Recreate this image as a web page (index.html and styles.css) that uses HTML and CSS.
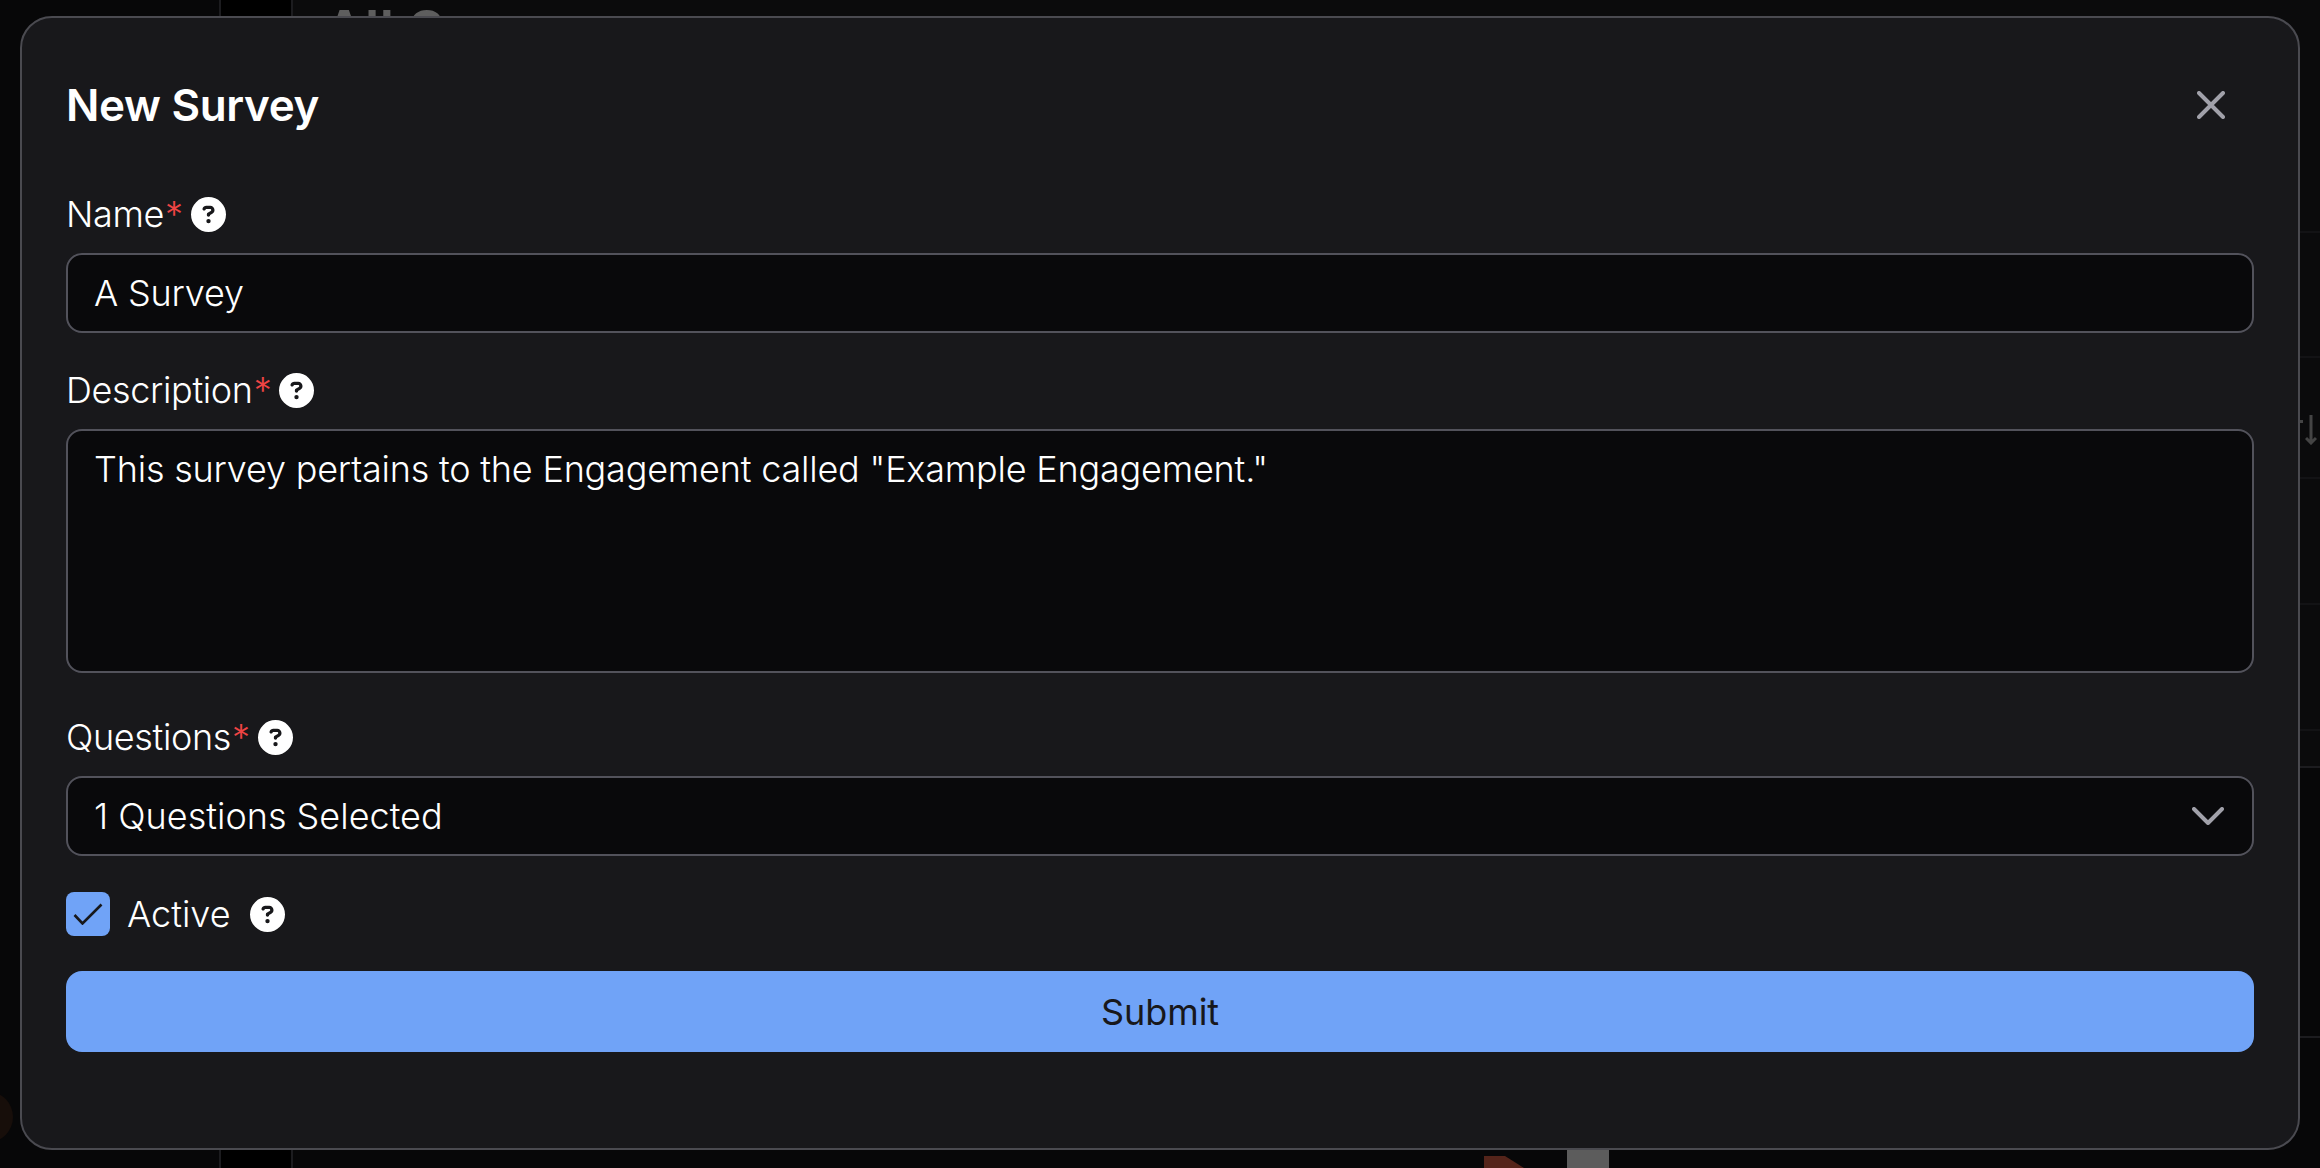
FILE: index.html
```html
<!DOCTYPE html>
<html lang="en">
<head>
<meta charset="utf-8">
<title>New Survey</title>
<link rel="stylesheet" href="styles.css">
</head>
<body>
<svg class="defs" aria-hidden="true"><symbol id="help" viewBox="0 0 512 512"><path d="M256 512A256 256 0 1 0 256 0a256 256 0 1 0 0 512zM169.800 165.300c7.900-22.300 29.100-37.300 52.800-37.300h58.300c34.900 0 63.100 28.300 63.100 63.100c0 22.600-12.100 43.500-31.700 54.800L280 264.400c-.2 13-10.900 23.600-24 23.600c-13.300 0-24-10.700-24-24V250.500c0-8.600 4.600-16.500 12.100-20.800l44.300-25.400c4.700-2.700 7.600-7.700 7.600-13.100c0-8.400-6.800-15.100-15.100-15.100H222.600c-3.400 0-6.400 2.100-7.500 5.300l-.4 1.200c-4.400 12.500-18.200 19-30.600 14.600s-19-18.200-14.600-30.600l.4-1.200zM224 352a32 32 0 1 1 64 0 32 32 0 1 1 -64 0z" fill="#fff"/></symbol></svg>
<div class="backdrop" aria-hidden="true">
  <div class="main-area"></div>
  <div class="rail"></div>
  <div class="peek-title">All S</div>
  <div class="line line-1"></div>
  <div class="line line-2"></div>
  <div class="line line-3"></div>
  <div class="line line-4"></div>
  <div class="line line-5"></div>
  <div class="line strong line-6"></div>
  <div class="line strong line-7"></div>
  <div class="tick"></div>
  <svg class="sort-arrow" viewBox="0 0 12 30"><path d="M6 0v28M1 23l5 5 5-5" fill="none" stroke="#444" stroke-width="3"/></svg>
  <div class="blob"></div>
  <svg class="chart-orange" viewBox="0 0 40 12"><path d="M0 0h21l19 12H0z" fill="#54241a"/></svg>
  <div class="chart-gray"></div>
</div>
<main class="modal">
  <header class="modal-head">
    <h1 class="modal-title">New Survey</h1>
    <svg class="close-icon" viewBox="0 0 28 28"><path d="M2 2l24 24M26 2L2 26" fill="none" stroke="#a1a1aa" stroke-width="4" stroke-linecap="round"/></svg>
  </header>
  <form class="form">
    <div class="field">
      <div class="label"><span>Name</span><span class="req">*</span><svg class="help"><use href="#help"/></svg></div>
      <div class="control">A Survey</div>
    </div>
    <div class="field">
      <div class="label"><span>Description</span><span class="req">*</span><svg class="help"><use href="#help"/></svg></div>
      <div class="control area">This survey pertains to the Engagement called "Example Engagement."</div>
    </div>
    <div class="field">
      <div class="label"><span>Questions</span><span class="req">*</span><svg class="help"><use href="#help"/></svg></div>
      <div class="control select"><span>1 Questions Selected</span>
        <svg class="chevron" viewBox="0 0 32 18"><path d="M2 2l14 14L30 2" fill="none" stroke="#a1a1aa" stroke-width="4" stroke-linecap="round" stroke-linejoin="round"/></svg>
      </div>
    </div>
    <div class="check-row">
      <span class="checkbox"><svg class="check" viewBox="0 0 30 22"><path d="M1.500 12l8 8.500L28.500 1.500" fill="none" stroke="#18181b" stroke-width="2.600"/></svg></span>
      <span class="check-label">Active</span>
      <svg class="help"><use href="#help"/></svg>
    </div>
    <div class="submit">Submit</div>
  </form>
</main>
</body>
</html>
```
FILE: styles.css
```css
* { box-sizing: border-box; }
html, body { margin: 0; height: 100%; }
body {
  position: relative;
  overflow: hidden;
  background: #070708;
  font-family: Inter, "Liberation Sans", sans-serif;
  font-weight: 300;
  color: #fff;
  padding: 16px 20px 18px;
}
.defs { position: absolute; width: 0; height: 0; }
.backdrop { position: absolute; inset: 0; overflow: hidden; }
.main-area { position: absolute; left: 291px; right: 0; top: 0; height: 767px; background: #0b0b0c; }
.rail { position: absolute; top: 0; bottom: 0; left: 219px; width: 74px; background: #000; border-left: 2px solid #1c1c1f; border-right: 2px solid #1c1c1f; }
.peek-title {
  position: absolute; left: 324px; top: -3px;
  font-size: 56px; font-weight: 600; line-height: 68px; color: #5e5e5e;
}
.line { position: absolute; left: 2300px; right: 0; height: 2px; background: #131315; }
.line.strong { background: #1c1c1f; }
.line-1 { top: 231px; }
.line-2 { top: 356px; }
.line-3 { top: 477px; }
.line-4 { top: 603px; }
.line-5 { top: 729px; }
.line-6 { top: 766px; }
.line-7 { top: 1036px; }
.tick { position: absolute; left: 2300px; top: 420px; width: 3px; height: 3px; background: #444; }
.sort-arrow { position: absolute; left: 2305px; top: 415px; width: 12px; height: 30px; }
.blob { position: absolute; left: -35px; top: 1092px; width: 48px; height: 50px; border-radius: 50%; background: #170e0a; }
.chart-orange { position: absolute; left: 1484px; top: 1156px; width: 40px; height: 12px; }
.chart-gray { position: absolute; left: 1567px; top: 1148px; width: 42px; height: 20px; background: #5c5c5c; }

.modal {
  position: relative;
  width: 2280px;
  height: 1134px;
  background: #18181b;
  border: 2px solid #4a4a50;
  border-radius: 32px;
  padding: 0 44px;
}
.modal-head {
  height: 176px;
  display: flex;
  justify-content: space-between;
  align-items: flex-start;
  padding-top: 57px;
}
.modal-title { margin: 0; font-size: 44px; line-height: 60px; font-weight: 600; letter-spacing: -0.35px; }
.close-icon { width: 28px; height: 28px; margin: 16px 29px 0 0; }
.form { display: flex; flex-direction: column; }
.field { display: flex; flex-direction: column; gap: 19px; margin-bottom: 37px; }
.field:nth-child(2) { margin-bottom: 44px; }
.field:nth-child(3) { margin-bottom: 36px; }
.label { display: flex; align-items: center; height: 40px; font-size: 36px; line-height: 40px; letter-spacing: -0.35px; }
.req { color: #ef4444; margin-left: 1px; }
.help { width: 35px; height: 35px; margin-left: 8px; }
.control {
  height: 80px;
  background: #09090b;
  border: 2px solid #52525b;
  border-radius: 16px;
  padding: 0 26px;
  display: flex;
  align-items: center;
  font-size: 36px;
  line-height: 48px;
  letter-spacing: -0.2px;
}
.control.area { height: 244px; align-items: flex-start; padding-top: 14px; }
.control.select { justify-content: space-between; padding-right: 28px; letter-spacing: 0; }
.chevron { width: 32px; height: 18px; }
.check-row { display: flex; align-items: center; height: 44px; font-size: 36px; margin-bottom: 35px; }
.checkbox {
  width: 44px; height: 44px; border-radius: 8px; background: #70a3f7;
  display: flex; align-items: center; justify-content: center;
}
.check { width: 30px; height: 22px; }
.check-label { margin-left: 17px; }
.check-row .help { margin-left: 19px; }
.submit {
  height: 81px; border-radius: 16px; background: #70a3f7;
  color: #18181b; font-size: 36px; font-weight: 400; letter-spacing: -0.1px;
  display: flex; align-items: center; justify-content: center;
}
```
